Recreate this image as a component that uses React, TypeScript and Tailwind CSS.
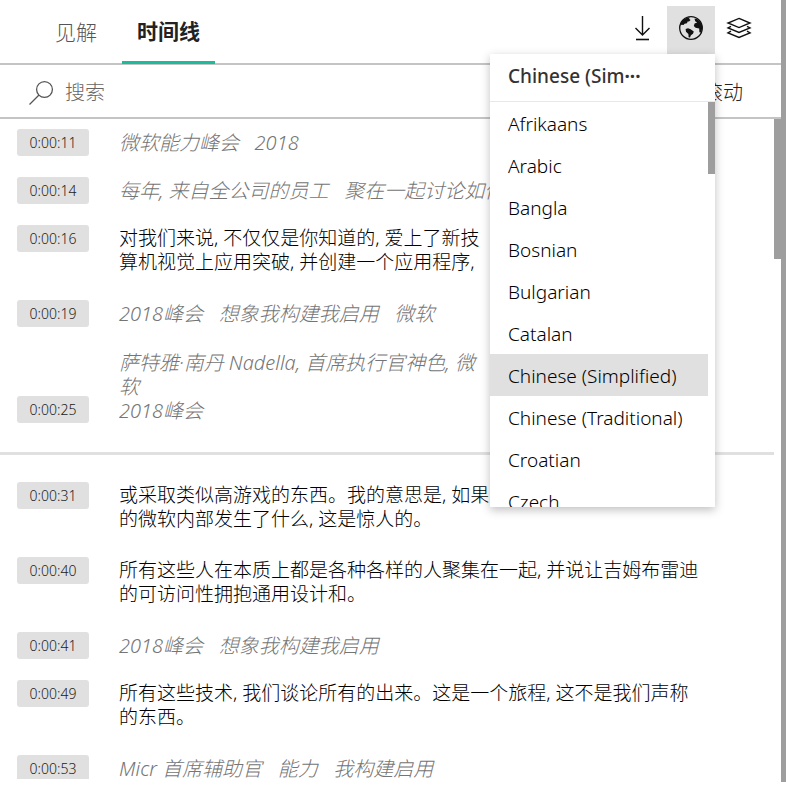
import { useState } from 'react'

type Line = {
  time: string
  text: string
  kind: 'speech' | 'ocr'
  alignEnd?: boolean
}

const languages = [
  'Afrikaans',
  'Arabic',
  'Bangla',
  'Bosnian',
  'Bulgarian',
  'Catalan',
  'Chinese (Simplified)',
  'Chinese (Traditional)',
  'Croatian',
  'Czech',
]

const firstScene: Line[] = [
  { time: '0:00:11', kind: 'ocr', text: '微软能力峰会   2018' },
  { time: '0:00:14', kind: 'ocr', text: '每年, 来自全公司的员工   聚在一起讨论如何' },
  {
    time: '0:00:16',
    kind: 'speech',
    text: '对我们来说, 不仅仅是你知道的, 爱上了新技\n算机视觉上应用突破, 并创建一个应用程序,',
  },
  { time: '0:00:19', kind: 'ocr', text: '2018峰会   想象我构建我启用   微软' },
  {
    time: '0:00:25',
    kind: 'ocr',
    alignEnd: true,
    text: '萨特雅·南丹 Nadella, 首席执行官神色, 微\n软\n2018峰会',
  },
]

const secondScene: Line[] = [
  {
    time: '0:00:31',
    kind: 'speech',
    text: '或采取类似高游戏的东西。我的意思是, 如果\n的微软内部发生了什么, 这是惊人的。',
  },
  {
    time: '0:00:40',
    kind: 'speech',
    text: '所有这些人在本质上都是各种各样的人聚集在一起, 并说让吉姆布雷迪\n的可访问性拥抱通用设计和。',
  },
  { time: '0:00:41', kind: 'ocr', text: '2018峰会   想象我构建我启用' },
  {
    time: '0:00:49',
    kind: 'speech',
    text: '所有这些技术, 我们谈论所有的出来。这是一个旅程, 这不是我们声称\n的东西。',
  },
  { time: '0:00:53', kind: 'ocr', text: 'Micr 首席辅助官   能力   我构建启用' },
]

function DownloadIcon() {
  return (
    <svg width="26" height="28" viewBox="0 0 26 28" fill="none" stroke="#111" strokeWidth="1.4">
      <path d="M12.5 2v19M5.5 14l7 7 7-7" />
      <path d="M6 25.5h13" strokeWidth="1.6" />
    </svg>
  )
}

function GlobeIcon() {
  return (
    <svg width="26" height="26" viewBox="0 0 26 26">
      <circle cx="13" cy="13" r="11.3" fill="none" stroke="#111" strokeWidth="1.3" />
      <path
        d="M2.2 10.5 3.5 7 6 4.2 9.5 2.4 12 2.6 11 3.8 12.6 5 11 6.6 9.6 6.4 9 8.3 6.6 8.8 5.5 10 3.8 9.8Z"
        fill="#111"
      />
      <path
        d="M7.6 14 10 13.3 12.6 14.3 15.8 16.4 15 18.8 12.9 20.3 12 22.6 10.6 22.3 10.4 19 8 16.8Z"
        fill="#111"
      />
      <path
        d="M16.5 3.4 19 4 21.6 6.2 23.8 9.5 24.3 13.5 23 17.5 21.4 17.3 21.2 13.4 17.6 12.8 15.8 11 16.6 8.6 19.2 7.6 17.2 6.2Z"
        fill="#111"
      />
    </svg>
  )
}

function LayersIcon() {
  return (
    <svg width="26" height="24" viewBox="0 0 26 24" fill="none" stroke="#111" strokeWidth="1.4">
      <path d="M13 2.4 24 7 13 11.6 2 7Z" />
      <path d="M5 10.3 2 11.9 13 16.5l11-4.6-3-1.6" />
      <path d="M5 15.2 2 16.8 13 21.4 24 16.8l-3-1.6" />
    </svg>
  )
}

function SearchIcon() {
  return (
    <svg width="26" height="26" viewBox="0 0 26 26" fill="none" stroke="#555" strokeWidth="1.3">
      <circle cx="16.5" cy="9.5" r="7.9" />
      <path d="M11 15 1.5 24.5" />
    </svg>
  )
}

function TimelineRow({ line }: { line: Line }) {
  const speech = line.kind === 'speech'

  return (
    <li
      className={`flex gap-[30px] ${line.alignEnd ? 'items-end pt-[3px]' : 'items-start'} ${
        speech ? 'pb-[26px]' : 'pb-[21px]'
      }`}
    >
      <button className="h-[27px] w-[72px] shrink-0 rounded-[3px] bg-[#e0e0e0] text-[14px] leading-[27px] text-[#222]">
        {line.time}
      </button>
      <p
        className={`whitespace-pre leading-6 ${
          speech ? 'pt-px text-[19px] text-black' : 'text-[20px] text-[#757575] italic'
        } ${speech || line.alignEnd ? '' : 'pt-[2px]'}`}
      >
        {line.text}
      </p>
    </li>
  )
}

function LanguageMenu({ value, onChange }: { value: string; onChange: (v: string) => void }) {
  return (
    <div className="absolute top-[54px] right-[66px] z-10 flex h-[453px] w-[225px] flex-col bg-white shadow-[0_3px_9px_rgba(0,0,0,0.25)]">
      <div className="h-12 shrink-0 border-b border-[#e8e8e8] px-[18px] text-[19px] leading-[45px] font-medium text-[#333]">
        {value.slice(0, 12)}
        <span className="font-bold">···</span>
      </div>
      <div className="flex min-h-0 flex-1">
        <ul role="listbox" aria-label="Language" className="min-w-0 flex-1 overflow-hidden">
          {languages.map((name) => (
            <li key={name} role="option" aria-selected={name === value}>
              <button
                onClick={() => onChange(name)}
                className={`block h-[42px] w-full px-[18px] text-left text-[19px] leading-[44px] whitespace-nowrap text-black ${
                  name === value ? 'bg-[#e0e0e0]' : ''
                }`}
              >
                {name}
              </button>
            </li>
          ))}
        </ul>
        <div className="h-[72px] w-[7px] bg-[#9e9e9e]" />
      </div>
    </div>
  )
}

export default function App() {
  const [language, setLanguage] = useState('Chinese (Simplified)')
  const [open, setOpen] = useState(true)

  return (
    <div className="flex h-screen bg-white pb-[15px] font-['Noto_Sans','Noto_Sans_CJK_SC',sans-serif] font-light">
      <div className="relative flex min-w-0 flex-1 flex-col pb-[3px]">
        <header className="flex h-[65px] shrink-0 justify-between border-b-2 border-[#c4c4c4] pr-[18px] pl-10">
          <nav className="flex gap-[10px] text-[21px] leading-[60px]">
            <button className="px-[15px] text-[#555]">见解</button>
            <button className="-mb-px border-b-3 border-[#1abc9c] px-[15px] font-bold text-[#222]">时间线</button>
          </nav>
          <div className="flex pt-[6px]">
            <button aria-label="Download" className="grid size-12 place-items-center pb-1">
              <DownloadIcon />
            </button>
            <button
              aria-label="Language"
              onClick={() => setOpen(!open)}
              className="grid size-12 place-items-center bg-[#e0e0e0] pb-1"
            >
              <GlobeIcon />
            </button>
            <button aria-label="Layers" className="grid size-12 place-items-center pb-1">
              <LayersIcon />
            </button>
          </div>
        </header>

        <div className="flex h-[54px] shrink-0 items-center border-b-2 border-[#c4c4c4] pt-1 pr-[38px] pl-7 text-[20px]">
          <label className="flex min-w-0 flex-1 items-center gap-[11px]">
            <SearchIcon />
            <input
              aria-label="搜索"
              placeholder="搜索"
              className="min-w-0 flex-1 outline-none placeholder:text-[#666]"
            />
          </label>
          <button className="text-[#222]">自动滚动</button>
        </div>

        <div className="flex min-h-0 flex-1">
          <div className="min-w-0 flex-1 overflow-hidden">
            <ul className="pt-[10px] pr-4 pb-2 pl-[17px]">
              {firstScene.map((line) => (
                <TimelineRow key={line.time} line={line} />
              ))}
            </ul>
            <ul className="border-t-3 border-[#e0e0e0] pt-[27px] pr-4 pl-[17px]">
              {secondScene.map((line) => (
                <TimelineRow key={line.time} line={line} />
              ))}
            </ul>
          </div>
          <div className="h-[140px] w-[7px] bg-[#9e9e9e]" />
        </div>

        {open && <LanguageMenu value={language} onChange={setLanguage} />}
      </div>
      <div className="w-[5px] bg-[#9e9e9e]" />
    </div>
  )
}
